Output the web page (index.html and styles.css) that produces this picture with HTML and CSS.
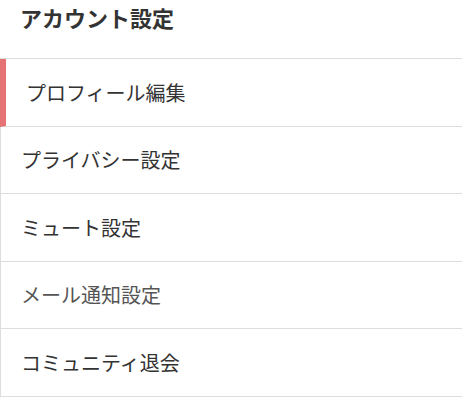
FILE: index.html
```html
<!DOCTYPE html>
<html lang="ja">
<head>
<meta charset="utf-8">
<title>アカウント設定</title>
<link rel="stylesheet" href="styles.css">
</head>
<body>
<div class="settings">
  <h2 class="settings-title">アカウント設定</h2>
  <ul class="menu">
    <li class="menu-item is-active">プロフィール編集</li>
    <li class="menu-item">プライバシー設定</li>
    <li class="menu-item">ミュート設定</li>
    <li class="menu-item is-muted">メール通知設定</li>
    <li class="menu-item">コミュニティ退会</li>
  </ul>
</div>
</body>
</html>
```
FILE: styles.css
```css
html, body {
  margin: 0;
  padding: 0;
  background: #fff;
}
body {
  font-family: "Noto Sans CJK JP", "Noto Sans", sans-serif;
  color: #333;
}
.settings-title {
  margin: 0;
  padding: 1px 20px 0;
  font-size: 22px;
  line-height: 32px;
  font-weight: 700;
  color: #333;
}
.menu {
  list-style: none;
  margin: 25px 0 0;
  padding: 0;
  border-top: 1px solid #ddd;
}
.menu-item {
  font-size: 20px;
  line-height: 29px;
  padding: 18.75px 20px;
  border-left: 1px solid #ddd;
  border-bottom: 1px solid #ddd;
  color: #333;
}
.menu-item.is-active {
  border-left: 6px solid #e57373;
}
.menu-item.is-muted {
  color: #555;
}
```
